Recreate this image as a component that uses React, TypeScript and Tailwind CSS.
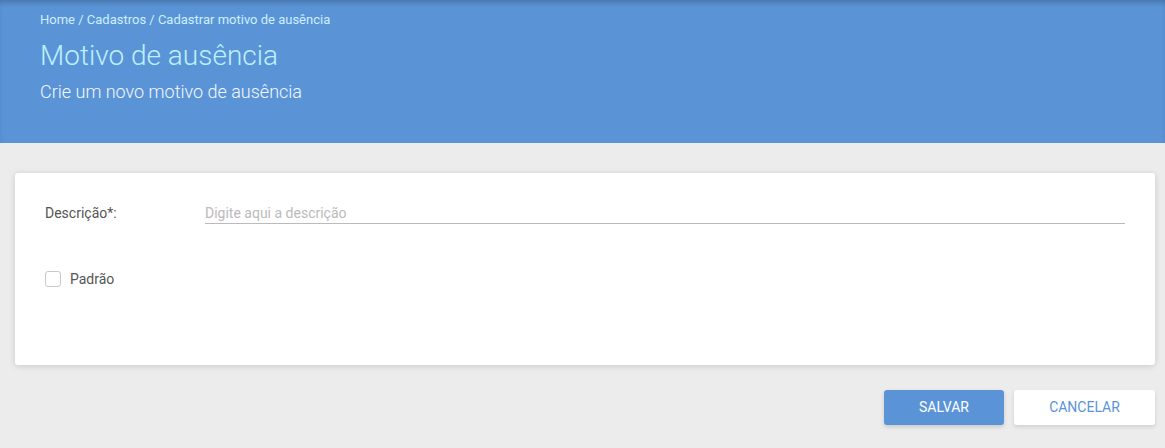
export default function App() {
  return (
    <div className="min-h-[448px] bg-[#ececec] font-['Roboto',sans-serif]">
      <header className="h-[143px] bg-[#5a94d7] pl-10 pt-[11px] shadow-[inset_0_5px_6px_-3px_rgba(0,0,0,0.25)]">
        <nav className="text-[13px] leading-[18px] text-[#cdefff]">
          Home / Cadastros / Cadastrar motivo de ausência
        </nav>
        <h1 className="mt-[10px] text-[28px] font-light leading-[34px] text-[#bdf0ff]">
          Motivo de ausência
        </h1>
        <p className="mt-[7px] text-[18px] font-light leading-[24px] text-[#f2f8ff]">
          Crie um novo motivo de ausência
        </p>
      </header>

      <main className="pt-[30px]">
        <section className="ml-[15px] mr-[10px] h-[192px] rounded-[3px] bg-white px-[30px] pt-[31px] shadow-[0_1px_6px_rgba(0,0,0,0.15)]">
          <div className="flex items-end">
            <label className="w-[160px] pb-[3px] text-[14px] leading-[16px] text-[#555]">
              Descrição*:
            </label>
            <input
              type="text"
              placeholder="Digite aqui a descrição"
              className="h-[20px] flex-1 border-b border-[#bbb] bg-transparent text-[14px] text-[#555] outline-none placeholder:text-[#bbb]"
            />
          </div>
          <label className="mt-[46px] flex items-center gap-[9px] text-[14px] leading-[18px] text-[#555]">
            <span className="h-4 w-4 rounded-[3px] border border-[#c8c8c8] bg-white" />
            Padrão
          </label>
        </section>

        <div className="mr-[10px] mt-[25px] flex justify-end gap-[10px]">
          <button className="h-[35px] w-[120px] rounded-[3px] bg-[#5a94d7] text-[14px] text-white shadow-[0_2px_4px_rgba(0,0,0,0.15)]">
            SALVAR
          </button>
          <button className="h-[35px] w-[141px] rounded-[3px] bg-white text-[14px] text-[#5a94d7] shadow-[0_2px_4px_rgba(0,0,0,0.12)]">
            CANCELAR
          </button>
        </div>
      </main>
    </div>
  );
}
